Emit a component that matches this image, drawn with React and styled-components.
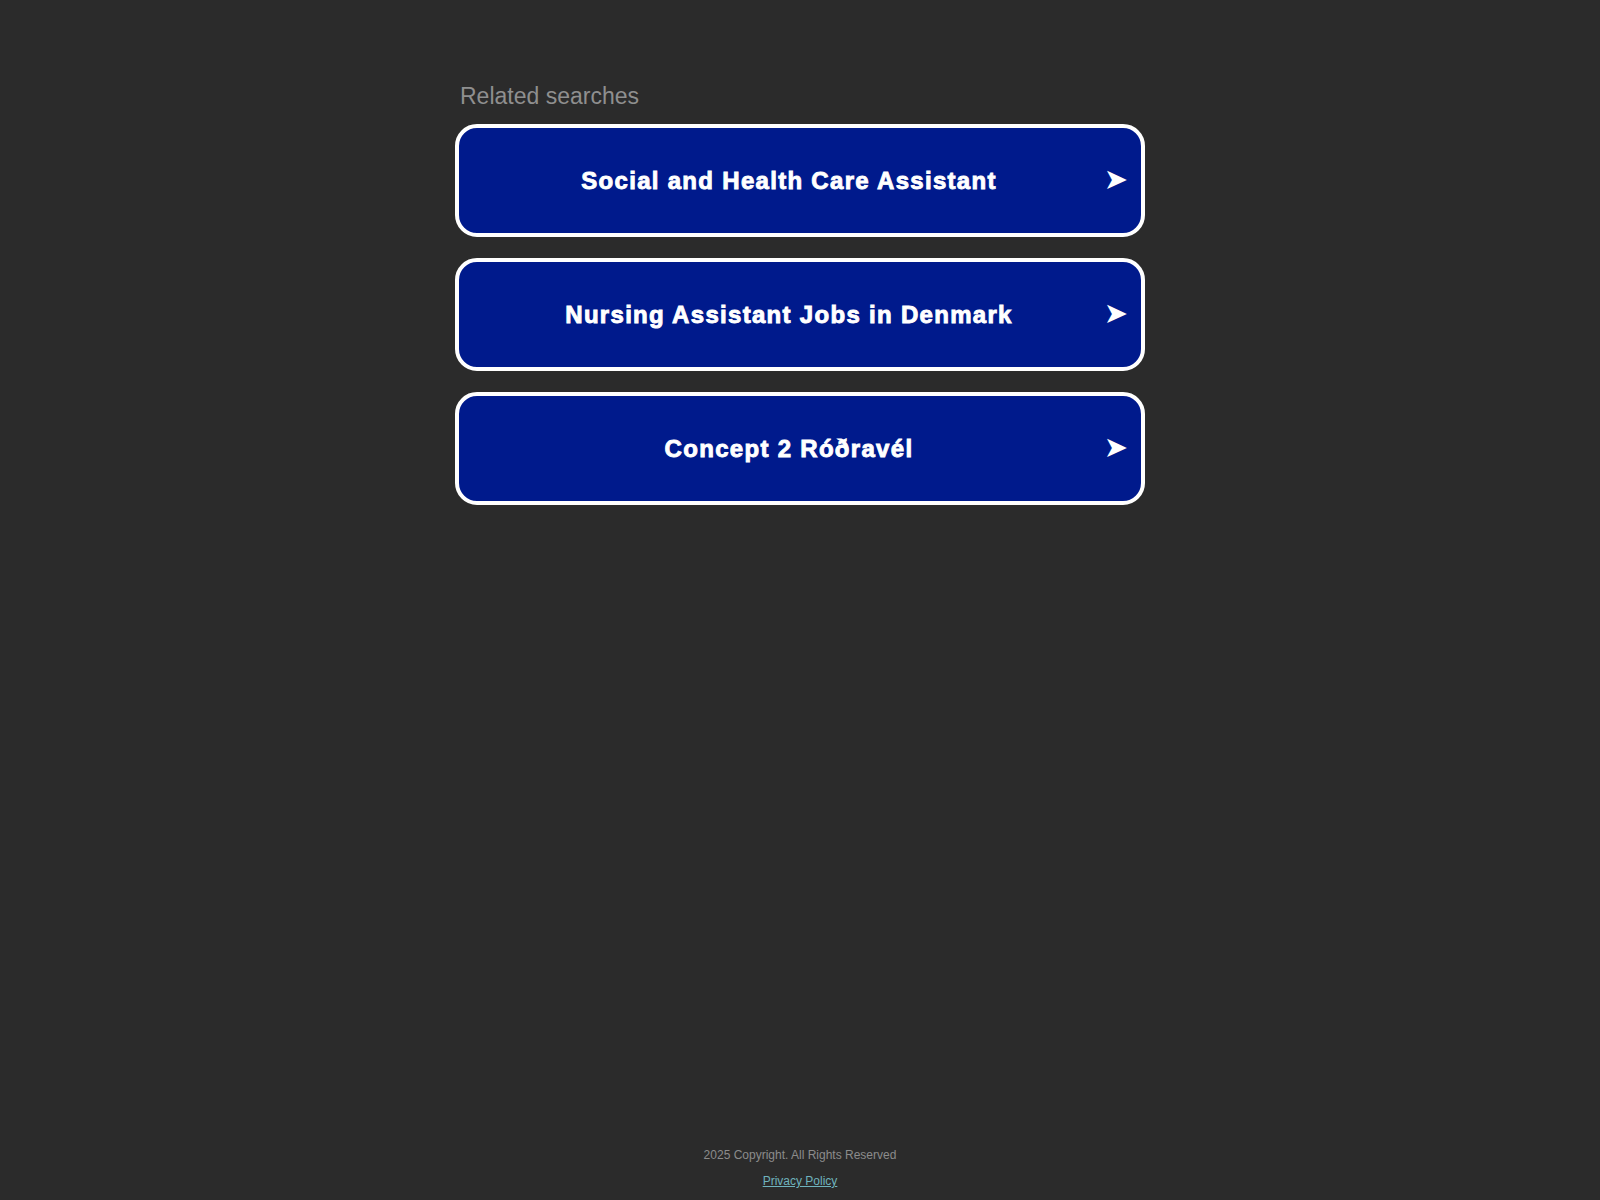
import React from "react";
import styled, { createGlobalStyle } from "styled-components";

const Global = createGlobalStyle`
  html, body { margin: 0; padding: 0; background: #2b2b2b; }
  body { font-family: "Liberation Sans", Arial, sans-serif; }
`;

const Page = styled.div`
  min-height: 100vh;
  display: flex;
  flex-direction: column;
  align-items: center;
`;

const Main = styled.main`
  width: 690px;
  padding-top: 83px;
  display: flex;
  flex-direction: column;
`;

const Heading = styled.div`
  color: #8f8f8f;
  font-size: 23px;
  padding-left: 5px;
  margin-bottom: 15px;
  line-height: 26px;
`;

const List = styled.div`
  display: flex;
  flex-direction: column;
  gap: 21px;
`;

const Item = styled.a`
  box-sizing: border-box;
  height: 113px;
  display: flex;
  align-items: center;
  padding: 0 13px 0 13px;
  background: #001a8c;
  border: 4px solid #ffffff;
  border-radius: 22px;
  color: #ffffff;
  text-decoration: none;
  cursor: pointer;
`;

const Label = styled.span`
  flex: 1;
  text-align: center;
  font-size: 24px;
  font-weight: bold;
  letter-spacing: 1.3px;
  -webkit-text-stroke: 0.9px #ffffff;
`;

const Arrow = styled.span`
  font-family: "DejaVu Sans", sans-serif;
  font-size: 29px;
  width: 22px;
  line-height: 1;
  display: flex;
  justify-content: flex-end;
  margin-top: -3px;
`;

const Footer = styled.footer`
  margin-top: auto;
  padding-bottom: 12px;
  text-align: center;
  font-size: 12px;
`;

const Copy = styled.div`
  color: #8c8c8c;
  margin-bottom: 12px;
`;

const Privacy = styled.a`
  color: #6fb3be;
  text-decoration: underline;
`;

const items = [
  "Social and Health Care Assistant",
  "Nursing Assistant Jobs in Denmark",
  "Concept 2 Róðravél",
];

export default function App() {
  return (
    <>
      <Global />
      <Page>
        <Main>
          <Heading>Related searches</Heading>
          <List>
            {items.map((t) => (
              <Item key={t} href="#">
                <Label>{t}</Label>
                <Arrow>➤</Arrow>
              </Item>
            ))}
          </List>
        </Main>
        <Footer>
          <Copy>2025 Copyright. All Rights Reserved</Copy>
          <Privacy href="#">Privacy Policy</Privacy>
        </Footer>
      </Page>
    </>
  );
}
